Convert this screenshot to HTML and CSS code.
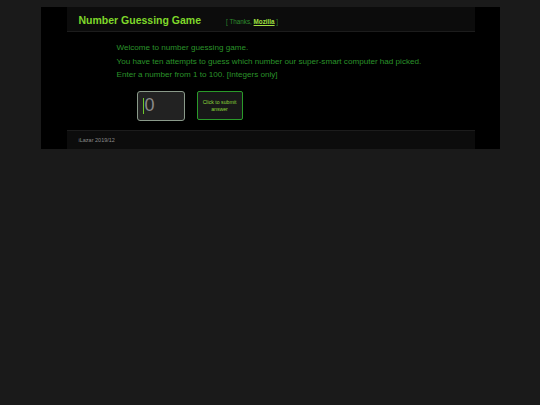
FILE: index.html
```html
<!DOCTYPE html>
<html>
<head>
<meta charset="utf-8">
<link rel="stylesheet" href="styles.css">
</head>
<body>
<div class="page">
  <header class="header">
    <h1 class="title">Number Guessing Game</h1>
    <span class="thanks">[ Thanks, <a class="thanks-link" href="#">Mozilla</a> ]</span>
  </header>
  <main class="main">
    <p class="line">Welcome to number guessing game.</p>
    <p class="line">You have ten attempts to guess which number our super-smart computer had picked.</p>
    <p class="line">Enter a number from 1 to 100. [Integers only]</p>
    <div class="form">
      <div class="guess"><span class="caret"></span><span class="guess-value">0</span></div>
      <button class="submit">Click to submit answer</button>
    </div>
  </main>
  <footer class="footer">iLazar 2019/12</footer>
</div>
</body>
</html>
```
FILE: styles.css
```css
html, body {
  margin: 0;
  padding: 0;
  background: #1a1a1a;
  font-family: "Liberation Sans", Arial, sans-serif;
}
body {
  padding-top: 7px;
}
.page {
  width: 459px;
  margin: 0 auto;
  background: #000;
  padding: 0 25px 0 26px;
  box-sizing: border-box;
  height: 142px;
  display: flex;
  flex-direction: column;
}
.header {
  height: 25px;
  background: #0c0c0c;
  border-bottom: 1px solid #1c1c1c;
  display: flex;
  align-items: center;
  padding-left: 12px;
  box-sizing: border-box;
}
.title {
  margin: 0;
  font-size: 10.5px;
  font-weight: bold;
  color: #7fd82a;
  padding-top: 2px;
}
.thanks {
  margin-left: 25px;
  font-size: 6.3px;
  color: #2c8c2c;
  padding-top: 4px;
}
.thanks-link {
  color: #a0e040;
  font-weight: bold;
}
.main {
  flex: 1;
  padding: 9px 0 0 50px;
}
.line {
  margin: 0;
  font-size: 8.1px;
  line-height: 13.5px;
  color: #2a932a;
}
.form {
  display: flex;
  align-items: center;
  gap: 12px;
  margin: 9px 0 0 20px;
}
.guess {
  width: 48px;
  height: 30px;
  box-sizing: border-box;
  border: 1px solid #8a9a8a;
  border-radius: 3px;
  background: #222;
  display: flex;
  align-items: center;
  padding-left: 5px;
}
.caret {
  width: 1px;
  height: 16px;
  background: #6cc82a;
}
.guess-value {
  font-size: 18px;
  color: #8a8a8a;
  margin-left: 1px;
}
.submit {
  width: 46px;
  height: 29px;
  box-sizing: border-box;
  border: 1.5px solid #2a9a2a;
  border-radius: 2px;
  background: #181818;
  color: #8ad63a;
  font-family: "Liberation Sans", Arial, sans-serif;
  font-size: 5.2px;
  line-height: 6.5px;
  padding: 0 2px;
  text-align: center;
}
.footer {
  height: 19px;
  background: #0c0c0c;
  border-top: 1px solid #1c1c1c;
  box-sizing: border-box;
  font-size: 5.5px;
  color: #8a8a8a;
  padding-left: 12px;
  display: flex;
  align-items: center;
}
```
